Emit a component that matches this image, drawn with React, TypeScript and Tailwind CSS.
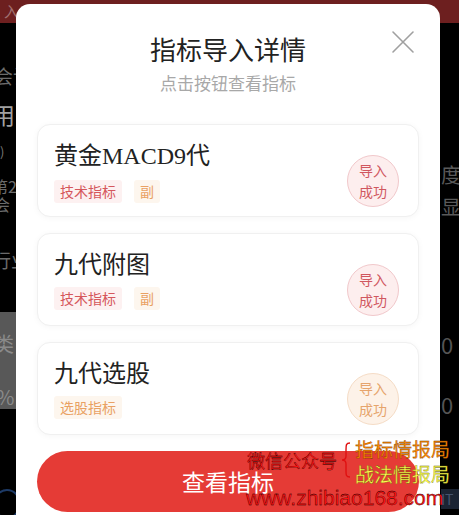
import React from "react";

const cjk = { fontFamily: '"Noto Sans CJK SC", "Noto Sans", sans-serif' };

type Item = { name: React.ReactNode; tags: { text: string; kind: "red" | "orange" }[]; badge: "red" | "orange" };

const items: Item[] = [
  {
    name: (
      <>
        黄金<span style={{ fontFamily: '"Liberation Serif", "DejaVu Serif", serif' }}>MACD9</span>代
      </>
    ),
    tags: [
      { text: "技术指标", kind: "red" },
      { text: "副", kind: "orange" },
    ],
    badge: "red",
  },
  {
    name: "九代附图",
    tags: [
      { text: "技术指标", kind: "red" },
      { text: "副", kind: "orange" },
    ],
    badge: "red",
  },
  {
    name: "九代选股",
    tags: [{ text: "选股指标", kind: "orange" }],
    badge: "orange",
  },
];

function Card({ item }: { item: Item }) {
  return (
    <div className="flex h-[93px] items-start justify-between rounded-[13px] border border-[#f0f0f0] bg-white pl-[16px] pr-[19px] pt-[14px] shadow-[0_1px_6px_rgba(0,0,0,0.04)]">
      <div className="flex flex-col">
        <div className="text-[24px] leading-[30px] text-[#222]">{item.name}</div>
        <div className="mt-[9px] flex gap-[12px]">
          {item.tags.map((t, i) =>
            t.kind === "red" ? (
              <span key={i} className="h-[23px] rounded-[3px] bg-[#fdf1f1] px-[6px] text-[14px] leading-[23px] text-[#d5575c]">
                {t.text}
              </span>
            ) : (
              <span key={i} className="h-[23px] rounded-[3px] bg-[#fdf6ee] px-[6px] text-[14px] leading-[23px] text-[#e9a163]">
                {t.text}
              </span>
            )
          )}
        </div>
      </div>
      {item.badge === "red" ? (
        <div className="mt-[16px] flex h-[52px] w-[52px] flex-col items-center justify-center rounded-full border border-[#f1c8cb] bg-[#fdeeee] text-[14px] leading-[21px] text-[#d0575f]">
          <span>导入</span>
          <span>成功</span>
        </div>
      ) : (
        <div className="mt-[16px] flex h-[52px] w-[52px] flex-col items-center justify-center rounded-full border border-[#f5dcc6] bg-[#fdf2e8] text-[14px] leading-[21px] text-[#e6a46c]">
          <span>导入</span>
          <span>成功</span>
        </div>
      )}
    </div>
  );
}

export default function App() {
  return (
    <div className="relative h-[515px] w-[459px] overflow-hidden bg-black" style={cjk}>
      {/* background app */}
      <div className="flex h-full flex-col">
        <div className="flex h-[28px] items-center bg-[#6d1f1f] pl-[4px] text-[15px] text-[#a07070]">入</div>
        <div className="flex flex-1">
          <div className="flex w-[16px] flex-col overflow-hidden">
            <div className="ml-[-6px] mt-[42px] whitespace-nowrap text-[19px] leading-[22px] text-[#6b6b6b]">会计</div>
            <div className="ml-[-8px] mt-[14px] whitespace-nowrap text-[23px] leading-[26px] text-[#a0a0a0]">用</div>
            <div className="mt-[18px] whitespace-nowrap text-[13px] leading-[14px] text-[#777]">)</div>
            <div className="ml-[-8px] mt-[18px] whitespace-nowrap text-[16px] leading-[18px] text-[#6b6b6b]">第2</div>
            <div className="ml-[-6px] whitespace-nowrap text-[16px] leading-[18px] text-[#6b6b6b]">会</div>
            <div className="ml-[-8px] mt-[36px] whitespace-nowrap text-[19px] leading-[22px] text-[#6b6b6b]">行业</div>
            <div className="mt-[41px] flex h-[97px] flex-col bg-[#585858]">
              <div className="ml-[-6px] mt-[20px] whitespace-nowrap text-[20px] leading-[24px] text-[#8a8a8a]">类</div>
              <div className="ml-[-4px] mt-[29px] whitespace-nowrap text-[20px] leading-[24px] text-[#8a8a8a]">%</div>
            </div>
            <div className="ml-[-6px] mt-[80px] h-[30px] w-[26px] rounded-full border-2 border-[#1d3a66]" />
          </div>
          <div className="flex-1" />
          <div className="flex w-[19px] flex-col overflow-hidden pl-[1px]">
            <div className="mt-[140px] text-[20px] leading-[24px] text-[#5a5a5a]">度</div>
            <div className="mt-[8px] text-[20px] leading-[24px] text-[#5a5a5a]">显</div>
            <div className="mt-[112px] text-[22px] leading-[26px] text-[#555]">0</div>
            <div className="mt-[34px] text-[22px] leading-[26px] text-[#555]">0</div>
            <div className="mt-[72px] h-[20px] bg-[#1b2433] text-[14px] leading-[20px] text-[#46546e]">IT</div>
          </div>
        </div>
      </div>

      {/* modal */}
      <div className="absolute left-[16px] top-[4px] h-[540px] w-[424px] rounded-[14px] bg-white">
        <div className="flex flex-col items-center pt-[29px]">
          <div className="text-[26px] leading-[32px] text-[#222]">指标导入详情</div>
          <div className="mt-[6px] text-[17px] leading-[24px] text-[#a8a8a8]">点击按钮查看指标</div>
        </div>
        <button className="absolute left-[374px] top-[25px] flex h-[26px] w-[26px] items-center justify-center">
          <svg width="24" height="24" viewBox="0 0 24 24" fill="none" stroke="#a0a0a0" strokeWidth="1.6" strokeLinecap="round">
            <path d="M2 2 L22 22 M22 2 L2 22" />
          </svg>
        </button>
        <div className="mt-[29px] flex flex-col gap-[16px] px-[21px]">
          {items.map((it, i) => (
            <Card key={i} item={it} />
          ))}
          <button className="h-[61px] w-full rounded-full bg-[#e53b36] text-[23px] text-white">查看指标</button>
        </div>
      </div>

      {/* watermark */}
      <div className="absolute left-[247px] top-[448px] text-[18px] leading-[24px] text-[#ff1010] [-webkit-text-stroke:0.3px_#000]">
        微信公众号
      </div>
      <svg className="absolute left-[340px] top-[442px]" width="12" height="36" viewBox="0 0 12 36" fill="none" stroke="#e01010" strokeWidth="1.4">
        <path d="M10 1 C6 1 6 3 6 8 L6 14 C6 16 5 18 2 18 C5 18 6 20 6 22 L6 29 C6 33 6 35 10 35" />
      </svg>
      <div className="absolute left-[355px] top-[437px] whitespace-nowrap text-[19px] leading-[24px] text-[#ff8a00] [-webkit-text-stroke:0.3px_#6a3000]">
        指标情报局
      </div>
      <div className="absolute left-[355px] top-[462px] whitespace-nowrap text-[19px] leading-[24px] text-[#ffff50] [-webkit-text-stroke:0.3px_#5a5a00]">
        战法情报局
      </div>
      <div
        className="absolute left-[246px] top-[486px] whitespace-nowrap text-[21px] leading-[24px] text-[#ff1010] [-webkit-text-stroke:0.3px_#000]"
        style={{ fontFamily: '"Liberation Sans", Arial, sans-serif' }}
      >
        www.zhibiao168.com
      </div>
    </div>
  );
}
